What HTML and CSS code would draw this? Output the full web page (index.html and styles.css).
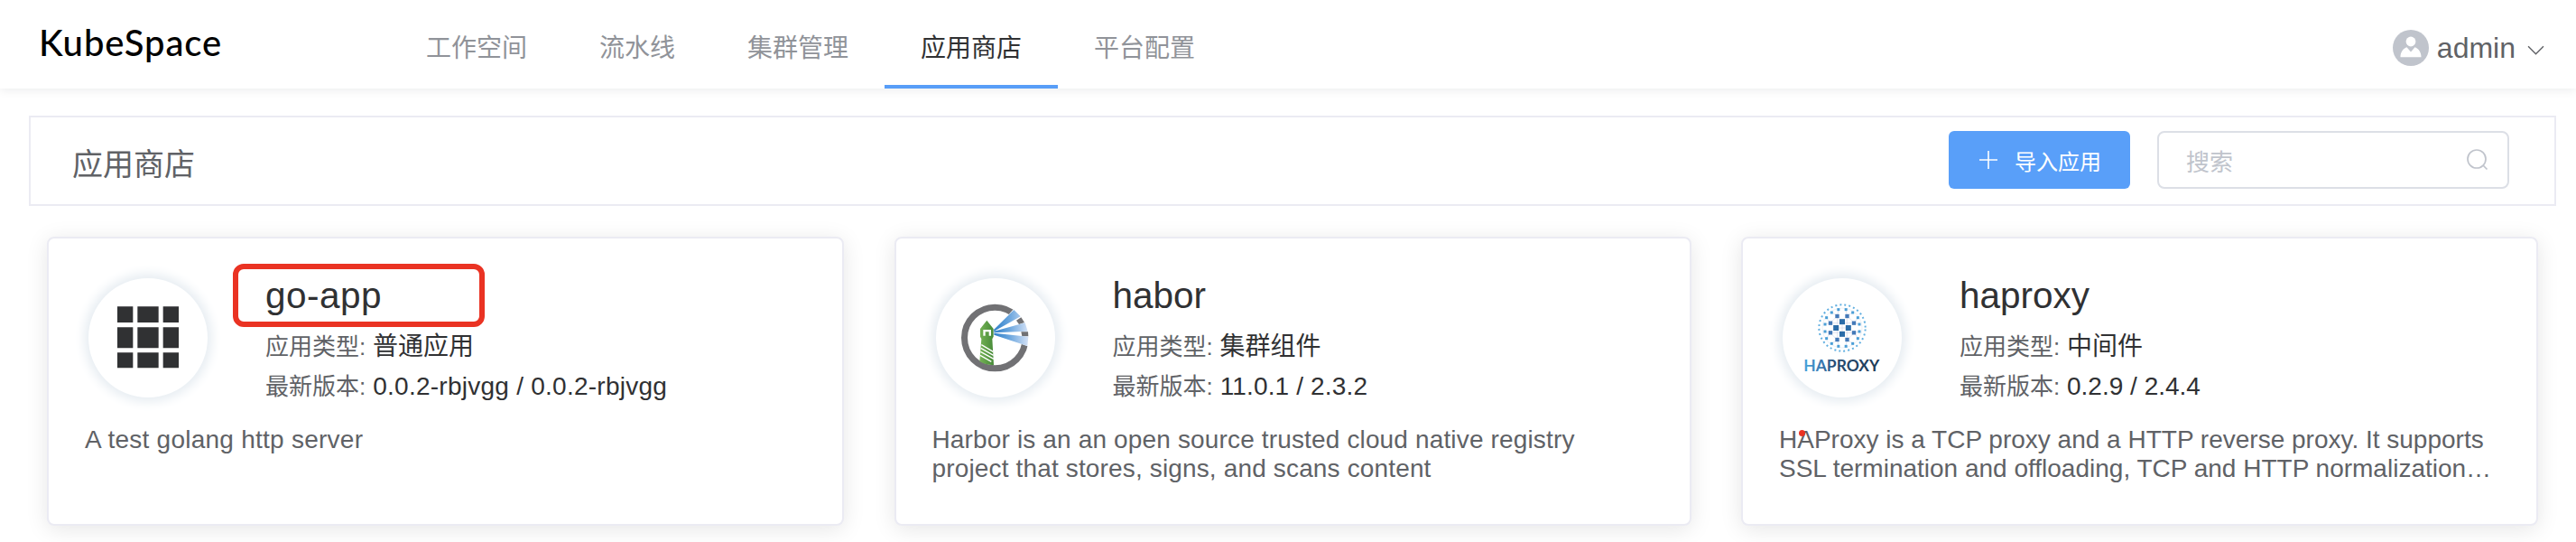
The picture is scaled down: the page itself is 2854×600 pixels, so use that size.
FILE: index.html
```html
<!DOCTYPE html>
<html lang="zh-CN">
<head>
<meta charset="utf-8">
<title>KubeSpace</title>
<link rel="stylesheet" href="styles.css">
</head>
<body>
<header class="topbar">
  <div class="logo">KubeSpace</div>
  <nav class="nav">
    <a class="nav-item">工作空间</a>
    <a class="nav-item">流水线</a>
    <a class="nav-item">集群管理</a>
    <a class="nav-item active">应用商店</a>
    <a class="nav-item">平台配置</a>
  </nav>
  <div class="user">
    <svg class="avatar" viewBox="0 0 40 40"><circle cx="20" cy="20" r="20" fill="#c0c4cc"/><circle cx="20" cy="13" r="5.400" fill="#fff"/><path d="M8.500 30.300C8.500 25 11 21 15.500 19.300L20 24.500L24.500 19.300C29 21 31.500 25 31.500 30.300Z" fill="#fff"/></svg>
    <span class="user-name">admin</span>
    <svg class="chevron" viewBox="0 0 18 10"><path d="M1 1L9 9L17 1" fill="none" stroke="#606266" stroke-width="1.300"/></svg>
  </div>
</header>
<main>
  <section class="toolbar">
    <h1 class="title">应用商店</h1>
    <button class="import"><svg class="plus" viewBox="0 0 20 20"><path d="M10 0V20M0 10H20" stroke="#fff" stroke-width="1.600"/></svg><span>导入应用</span></button>
    <div class="search"><span>搜索</span><svg class="lens" viewBox="0 0 24 24"><circle cx="11" cy="11" r="10" fill="none" stroke="#c0c4cc" stroke-width="1.700"/><path d="M18 18L22.500 22.500" stroke="#c0c4cc" stroke-width="1.700"/></svg></div>
  </section>
  <section class="cards">
    <article class="card">
      <div class="summary">
        <div class="icon"><svg viewBox="54 38 396 396" fill="#303133"><path d="M150 132h52v53h-52zM217 132h70v53h-70zM302 132h52v53h-52zM150 201h52v69h-52zM217 201h70v69h-70zM302 201h52v69h-52zM150 285h52v51h-52zM217 285h70v51h-70zM302 285h52v51h-52z"/></svg></div>
        <div class="info">
          <h2 class="name marked">go-app</h2>
          <p class="meta"><span class="label">应用类型:</span> 普通应用</p>
          <p class="meta wide"><span class="label">最新版本:</span> 0.0.2-rbjvgg / 0.0.2-rbjvgg</p>
        </div>
      </div>
      <p class="desc wide">A test golang http server</p>
    </article>
    <article class="card">
      <div class="summary">
        <div class="icon"><svg viewBox="36 38 396 396">
          <defs>
            <linearGradient id="beam" gradientUnits="userSpaceOnUse" x1="229" x2="343" y1="0" y2="0"><stop offset="0" stop-color="#2f7fc8"/><stop offset=".45" stop-color="#6ba6de"/><stop offset="1" stop-color="#d5e2f6"/></linearGradient>
            <linearGradient id="tower"><stop offset="0" stop-color="#75b255"/><stop offset="1" stop-color="#468a38"/></linearGradient>
          </defs>
          <circle cx="232" cy="236" r="101.500" fill="none" stroke="#717174" stroke-width="21"/>
          <path d="M228 216L296 138L350 150V262L340 264L228 224Z" fill="#fff"/>
          <path d="M303 178L319 168L330 185L312 191ZM319 216H342L343 231H322Z" fill="#717174"/>
          <path d="M228 209L295 143L317 165L229 214ZM229 214L332 186L341 214L229 219ZM229 220L343 232L340 263L229 226Z" fill="url(#beam)"/>
          <path d="M183 206L205 178L227 206V232L223 240L228 326Q204 328 181 314L187 240L183 232Z" fill="url(#tower)"/>
          <path d="M193 209H219V229H212V216H200V229H193Z" fill="#fff"/>
          <path d="M187 259L226 282M185 270L227 294M184 282L228 306M183 294L220 315" stroke="#fff" stroke-width="4"/>
        </svg></div>
        <div class="info">
          <h2 class="name">habor</h2>
          <p class="meta"><span class="label">应用类型:</span> 集群组件</p>
          <p class="meta slightly-wide"><span class="label">最新版本:</span> 11.0.1 / 2.3.2</p>
        </div>
      </div>
      <p class="desc slightly-wide">Harbor is an an open source trusted cloud native registry<br>project that stores, signs, and scans content</p>
    </article>
    <article class="card">
      <div class="summary">
        <div class="icon"><svg viewBox="30 38 396 396">
          <defs>
            <linearGradient id="word" gradientUnits="userSpaceOnUse" x1="100" x2="352" y1="0" y2="0"><stop offset="0" stop-color="#4aa5dc"/><stop offset=".25" stop-color="#3a76ad"/><stop offset=".4" stop-color="#274c73"/><stop offset="1" stop-color="#1f3b57"/></linearGradient>
            <path id="small" d="M-4.500-4.500h9v9h-9z"/>
            <path id="mid" d="M-6.500-6.500h13v13h-13z"/>
            <path id="big" d="M-9-9h18v18h-18z"/>
          </defs>
          <g transform="translate(228 203)">
            <path d="M-40-16H40M-40 16H40M-16-40V40M16-40V40M-20 0H20M0-20V20M-40-16L-16-40M16-40L40-16M-40 16L-16 40M16 40L40 16M-57-12L-40-16L-52-34M-34-51L-16-40L-12-61M12-61L16-40L35-51M52-34L40-16L58-12M58 12L40 16L52 34M35 51L16 40L12 61M-12 61L-16 40L-34 51M-52 34L-40 16L-57 12" fill="none" stroke="#d5d8e8" stroke-width="2"/>
            <circle r="66" fill="none" stroke="#e4e8f0" stroke-width="2"/>
            <circle r="77" fill="none" stroke="#62afe0" stroke-width="6" stroke-dasharray="6 9.119" transform="rotate(3.400)"/>
            <g fill="#4a9ed6"><use href="#small" x="-12.500" y="-61"/><use href="#small" x="12.500" y="-61"/><use href="#small" x="-35" y="-51"/><use href="#small" x="35" y="-51"/><use href="#small" x="-52" y="-34"/><use href="#small" x="52" y="-34"/><use href="#small" x="-57" y="-12"/><use href="#small" x="57" y="-12"/><use href="#small" x="-57" y="12"/><use href="#small" x="57" y="12"/><use href="#small" x="-52" y="35"/><use href="#small" x="52" y="35"/><use href="#small" x="-35" y="52"/><use href="#small" x="35" y="52"/><use href="#small" x="-12.500" y="61"/><use href="#small" x="12.500" y="61"/></g>
            <g fill="#4479b8"><use href="#mid" x="-16.500" y="-39"/><use href="#mid" x="16.500" y="-39"/><use href="#mid" x="-39" y="-16"/><use href="#mid" x="39" y="-16"/><use href="#mid" x="-39" y="16"/><use href="#mid" x="39" y="16"/><use href="#mid" x="-16.500" y="39"/><use href="#mid" x="16.500" y="39"/></g>
            <g fill="#2b6ca8"><use href="#big" y="-20.500"/><use href="#big" y="20.500"/><use href="#big" x="-20.500"/><use href="#big" x="20.500"/></g>
          </g>
          <text class="wordmark" x="100" y="347" textLength="252" lengthAdjust="spacingAndGlyphs" fill="url(#word)">HAPROXY</text>
        </svg></div>
        <div class="info">
          <h2 class="name">haproxy</h2>
          <p class="meta"><span class="label">应用类型:</span> 中间件</p>
          <p class="meta"><span class="label">最新版本:</span> 0.2.9 / 2.4.4</p>
        </div>
      </div>
      <p class="desc dotted">HAProxy is a TCP proxy and a HTTP reverse proxy. It supports<br>SSL termination and offloading, TCP and HTTP normalization…</p>
    </article>
  </section>
</main>
</body>
</html>
```
FILE: styles.css
```css
*, *::after { box-sizing: border-box; margin: 0; padding: 0; }
body { height: 600px; overflow: hidden; background: #fff; color: #303133; font-family: "Liberation Sans", "Noto Sans CJK SC", sans-serif; }
.topbar { display: flex; height: 98px; padding: 0 35px 0 43px; box-shadow: 0 2px 10px rgba(0, 21, 41, .08); }
.logo { width: 389px; padding-top: 23px; color: #000; font: 500 40px/48px Lato, sans-serif; letter-spacing: .9px; }
.nav { display: flex; flex: 1; }
.nav-item { height: 98px; padding: 0 40px; color: #909399; font-size: 28px; line-height: 108px; }
.nav-item.active { color: #303133; border-bottom: 4px solid #589ef8; }
.user { display: flex; align-items: center; padding-top: 8px; color: #606266; font-size: 32px; }
.avatar { width: 40px; height: 40px; }
.user-name { margin-left: 9px; }
.chevron { width: 19px; height: 11px; margin: 4px 0 0 13px; }
main { padding: 30px 22px 0 32px; }
.toolbar { display: flex; align-items: center; height: 100px; padding: 0 50px 2px 46px; border: 2px solid #ebebf3; }
.title { flex: 1; padding-top: 5px; color: #606266; font-size: 34px; font-weight: 400; }
.import { display: flex; align-items: center; width: 201px; height: 64px; padding-left: 34px; gap: 19px; border: 0; border-radius: 6px; background: #599ff9; color: #fff; font: 24px "Liberation Sans", "Noto Sans CJK SC", sans-serif; }
.plus { width: 20px; height: 20px; }
.search { display: flex; align-items: center; justify-content: space-between; width: 390px; height: 64px; margin-left: 30px; padding: 0 21px 0 30px; border: 2px solid #dcdfe6; border-radius: 8px; color: #c0c4cc; font-size: 26px; }
.lens { width: 24px; height: 24px; }
.cards { display: grid; grid-template-columns: repeat(3, 883px); gap: 55.5px; padding: 34px 0 0 20px; }
.card { height: 320px; padding: 20px 38px 0 40px; border: 2px solid #ebebf3; border-radius: 8px; background: #fff; box-shadow: 0 4px 24px rgba(0, 0, 0, .1); }
.summary { display: flex; }
.icon { width: 132px; height: 132px; margin: 24px 0 0 4px; border-radius: 50%; box-shadow: 0 0 12px 5px #e7edf2; }
.icon svg { display: block; width: 132px; height: 132px; }
.info { padding-left: 64px; }
.name { position: relative; height: 78px; font-size: 40.500px; font-weight: 400; line-height: 86px; }
/* highlight frame around the application name */
.marked { letter-spacing: .5px; }
.marked::after { content: ""; position: absolute; left: -36px; top: 8px; width: 279px; height: 70px; border: 6px solid #ea3323; border-radius: 12px; }
.meta { height: 44px; font-size: 28px; line-height: 44px; white-space: nowrap; }
.label { color: #606266; font-size: 26px; letter-spacing: 0; }
.desc { position: relative; margin-top: 21px; color: #606266; font-size: 28px; line-height: 32px; white-space: nowrap; }
.wide { letter-spacing: .25px; }
.slightly-wide { letter-spacing: .15px; }
.dotted::after { content: ""; position: absolute; left: 22px; top: 5px; width: 7px; height: 7px; border-radius: 50%; background: #ea3323; }
.wordmark { font: 700 49px Lato, sans-serif; }
```
